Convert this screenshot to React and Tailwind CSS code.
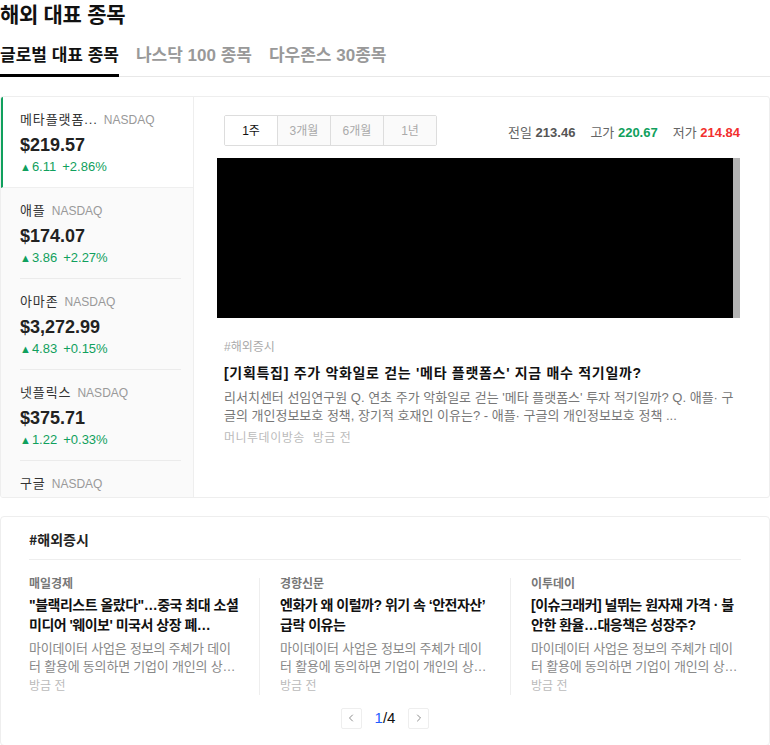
import { ChevronLeft, ChevronRight } from "lucide-react";

const stocks = [
  { name: "메타플랫폼...", price: "$219.57", diff: "6.11", rate: "+2.86%" },
  { name: "애플", price: "$174.07", diff: "3.86", rate: "+2.27%" },
  { name: "아마존", price: "$3,272.99", diff: "4.83", rate: "+0.15%" },
  { name: "넷플릭스", price: "$375.71", diff: "1.22", rate: "+0.33%" },
  { name: "구글", price: "$2,792.99", diff: "25.21", rate: "+0.91%" },
];

const desc =
  "마이데이터 사업은 정보의 주체가 데이터 활용에 동의하면 기업이 개인의 상세한 정보를 한곳에 모아 관리할 수 있도록 하는 사업이다.";

const news = [
  {
    press: "매일경제",
    title: "\"블랙리스트 올랐다\"…중국 최대 소셜 미디어 '웨이보' 미국서 상장 폐…",
  },
  { press: "경향신문", title: "엔화가 왜 이럴까? 위기 속 ‘안전자산’ 급락 이유는" },
  { press: "이투데이", title: "[이슈크래커] 널뛰는 원자재 가격 · 불안한 환율…대응책은 성장주?" },
];

const periods = ["1주", "3개월", "6개월", "1년"];

const App = () => {
  return (
    <div className="w-[770px] bg-white text-[#111] font-['Liberation_Sans','Noto_Sans_CJK_KR',sans-serif]">
      {/* HEADER */}
      <h1 className="text-[21px] leading-[29px] font-bold tracking-[-0.3px]">해외 대표 종목</h1>

      {/* TABS */}
      <div className="mt-[15px] flex gap-[17px] border-b border-[#e8e8e8]">
        <div className="-mb-px pb-[6px] border-b-[3px] border-black text-[17px] leading-[24px] font-bold">
          글로벌 대표 종목
        </div>
        <div className="pb-[6px] text-[17px] leading-[24px] font-bold text-[#999]">나스닥 100 종목</div>
        <div className="pb-[6px] text-[17px] leading-[24px] font-bold text-[#999]">다우존스 30종목</div>
      </div>

      {/* MAIN PANEL */}
      <div className="mt-[19px] flex h-[402px] border border-[#eee] rounded-[3px] overflow-hidden">
        {/* STOCK LIST */}
        <div className="w-[193px] shrink-0 border-r border-[#eee] bg-[#fafafa] overflow-y-auto [&::-webkit-scrollbar]:w-[5px] [&::-webkit-scrollbar-track]:bg-[#f4f4f4] [&::-webkit-scrollbar-thumb]:bg-[#e4e4e4]">
          {stocks.map((s, i) => (
            <div
              key={s.name}
              className={
                i === 0
                  ? "bg-white border-l-2 border-[#10a05d] border-b border-b-[#efefef] pl-[17px] pr-[12px]"
                  : "pl-[19px] pr-[12px]"
              }
            >
              <div
                className={
                  i === 0 || i === stocks.length - 1
                    ? "pt-[14px] pb-[11px]"
                    : "pt-[14px] pb-[11px] border-b border-[#ebebeb]"
                }
              >
                <div className="flex items-baseline gap-[6px] leading-[18px]">
                  <span className="text-[13px] text-[#333] tracking-[0.9px]">{s.name}</span>
                  <span className="text-[12px] text-[#999]">NASDAQ</span>
                </div>
                <div className="mt-[3px] text-[18px] leading-[26px] font-bold text-[#222]">{s.price}</div>
                <div className="flex items-center text-[13px] leading-[18px] text-[#10a05d]">
                  <span className="text-[11px] mr-[1px]">▲</span>
                  <span>{s.diff}</span>
                  <span className="ml-[6px]">{s.rate}</span>
                </div>
              </div>
            </div>
          ))}
        </div>

        {/* DETAIL */}
        <div className="flex-1 pl-[23px] pr-[29px] pt-[18px]">
          <div className="ml-[7px] flex items-center justify-between">
            <div className="flex border border-[#ddd] rounded-[2px] overflow-hidden">
              {periods.map((p, i) => (
                <div
                  key={p}
                  className={
                    i === 0
                      ? "w-[52px] h-[29px] flex items-center justify-center text-[12px] text-[#111] bg-white"
                      : "w-[53px] h-[29px] flex items-center justify-center text-[12px] text-[#aaa] bg-[#fafafa] border-l border-[#ddd]"
                  }
                >
                  {p}
                </div>
              ))}
            </div>
            <div className="flex gap-[15px] text-[13px] mt-[4px]">
              <span className="text-[#666]">
                전일 <b className="text-[#555]">213.46</b>
              </span>
              <span className="text-[#666]">
                고가 <b className="text-[#10a05d]">220.67</b>
              </span>
              <span className="text-[#666]">
                저가 <b className="text-[#f2302e]">214.84</b>
              </span>
            </div>
          </div>

          {/* CHART */}
          <div className="mt-[12px] h-[160px] bg-black border-r-[7px] border-[#b3b3b3]" />

          {/* NEWS */}
          <div className="ml-[7px] mt-[20px]">
            <div className="text-[12px] leading-[18px] text-[#aaa]">#해외증시</div>
            <div className="mt-[7px] text-[14px] leading-[20px] font-bold text-[#111] tracking-[0.7px]">
              [기획특집] 주가 악화일로 걷는 '메타 플랫폼스' 지금 매수 적기일까?
            </div>
            <div className="mt-[6px] text-[13px] leading-[18px] text-[#777] break-all line-clamp-2">
              리서치센터 선임연구원 Q. 연초 주가 악화일로 걷는 '메타 플랫폼스' 투자 적기일까? Q. 애플· 구글의
              개인정보보호 정책, 장기적 호재인 이유는? - 애플· 구글의 개인정보보호 정책 ...
            </div>
            <div className="mt-[4px] flex gap-[8px] text-[12px] leading-[18px] text-[#bbb] tracking-[0.5px]">
              <span>머니투데이방송</span>
              <span>방금 전</span>
            </div>
          </div>
        </div>
      </div>

      {/* NEWS PANEL */}
      <div className="mt-[18px] border border-[#eee] rounded-[4px] px-[28px] pt-[12px] pb-[15px]">
        <div className="pb-[10px] border-b border-[#eee] text-[14px] leading-[20px] font-bold text-[#222] font-['Noto_Sans_CJK_KR',sans-serif]">
          #해외증시
        </div>
        <div className="mt-[18px] flex">
          {news.map((n, i) => (
            <div
              key={n.press}
              className={
                i === 0
                  ? "w-[231px] pr-[20px] border-r border-[#eee]"
                  : i === 1
                  ? "w-[251px] px-[20px] border-r border-[#eee]"
                  : "flex-1 pl-[20px]"
              }
            >
              <div className="-mt-[2px] text-[12px] leading-[17px] text-[#777] font-bold">{n.press}</div>
              <div className="mt-[2px] text-[14px] leading-[20px] font-bold text-[#111] tracking-[-0.5px] break-all line-clamp-2">
                {n.title}
              </div>
              <div className="mt-[5px] text-[13px] leading-[18px] text-[#888] tracking-[-0.2px] break-all line-clamp-2">
                {desc}
              </div>
              <div className="mt-[2px] text-[12px] leading-[17px] text-[#bbb]">방금 전</div>
            </div>
          ))}
        </div>

        {/* PAGINATION */}
        <div className="mt-[12px] flex items-center justify-center gap-[13px]">
          <button className="w-[21px] h-[21px] flex items-center justify-center border border-[#eee] rounded-[2px] text-[#666]">
            <ChevronLeft size={12} strokeWidth={1.5} />
          </button>
          <span className="text-[15px] text-[#111]">
            <span className="text-[#1f5eff]">1</span>/4
          </span>
          <button className="w-[21px] h-[21px] flex items-center justify-center border border-[#eee] rounded-[2px] text-[#666]">
            <ChevronRight size={12} strokeWidth={1.5} />
          </button>
        </div>
      </div>
    </div>
  );
};

export default App;
